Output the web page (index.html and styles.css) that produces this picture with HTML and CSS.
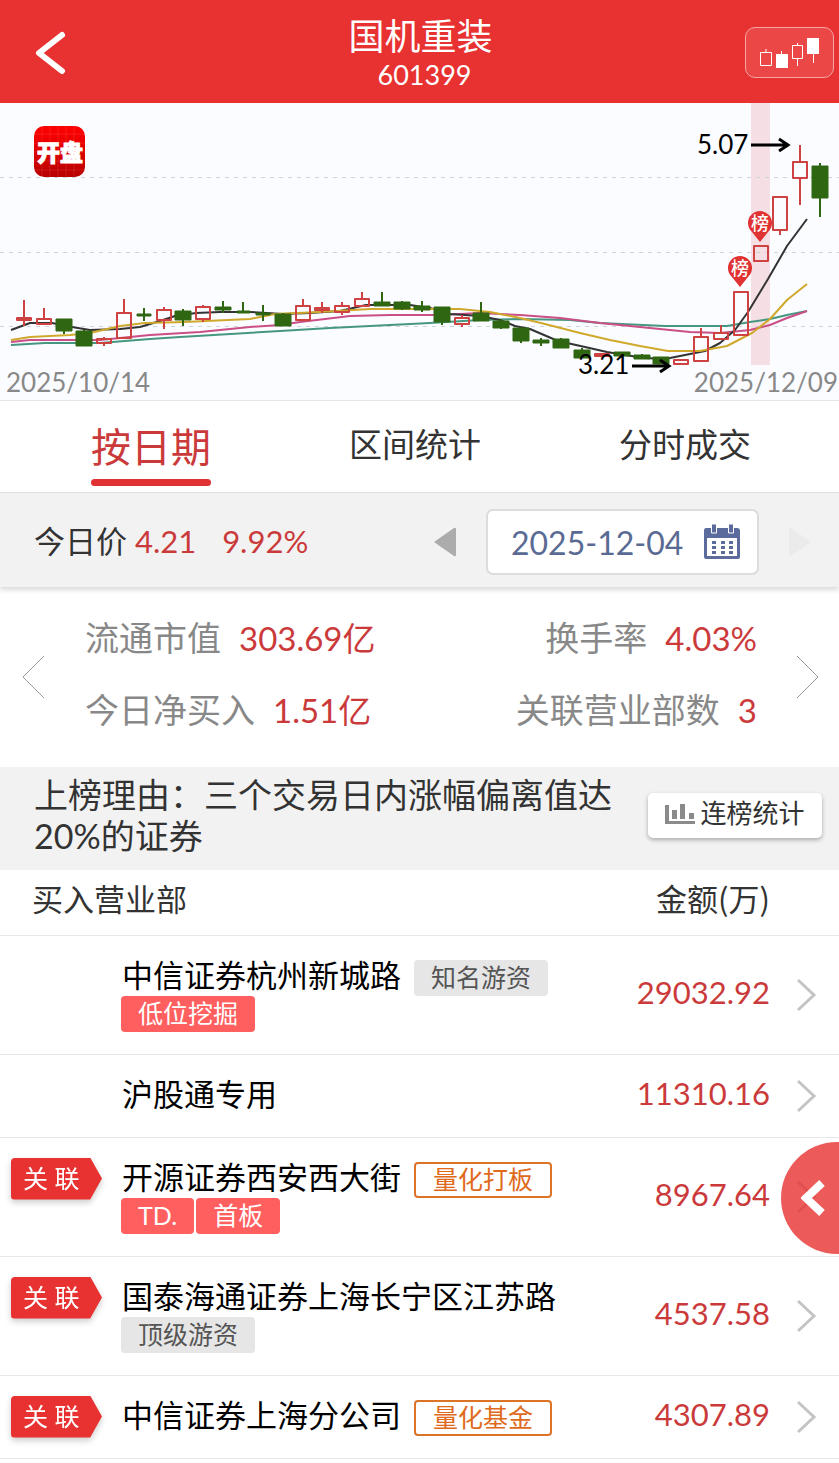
FILE: index.html
```
<!DOCTYPE html>
<html lang="zh-CN">
<head>
	<meta charset="utf-8">
	<meta name="viewport" content="width=device-width">
	<title>国机重装 601399</title>
	<link rel="stylesheet" href="styles.css">
</head>
<body>
	<header class="header">
		<button class="back" aria-label="返回">
			<svg width="34" height="48" viewBox="0 0 34 48"><path d="M29 6 L6 24 L29 42" /></svg>
		</button>
		<div class="title">
			<h1>国机重装</h1>
			<p>601399</p>
		</div>
		<button class="kline-btn" aria-label="K线">
			<svg width="60" height="32" viewBox="0 0 60 32">
				<path class="line" d="M.5 14.500h11v13h-11z M6 14v-3 M32.500 7.500h10v13h-10z M37.500 7v-2 M37.500 21v7" />
				<path class="solid" d="M16 16h5v-3h1v3h6v14h-12z M47 0h12v16h-5v9h-1v-9h-6z" />
			</svg>
		</button>
	</header>

	<section class="chart">
		<svg viewBox="0 103 839 297">
			<defs>
				<linearGradient id="logo" x1="0" y1="0" x2="0" y2="1">
					<stop offset="0.100" stop-color="#fb0000" />
					<stop offset="1" stop-color="#b80000" />
				</linearGradient>
			</defs>
			<rect class="band" x="751" y="103" width="19" height="262" />
			<path class="grid" d="M0 177.500H839 M0 252.500H839 M0 326.500H839" />

			<!-- logo -->
			<rect x="34" y="126" width="51" height="51" rx="10" fill="url(#logo)" />
			<path class="logo-grid" d="M42 126v51 M50 126v51 M58 126v51 M66 126v51 M74 126v51 M34 134h51 M34 143h51 M34 152h51 M34 161h51 M34 170h51" />
			<text class="logo-text" x="60" y="161">开盘</text>

			<!-- moving averages -->
			<path class="ma teal" d="M11 345L45 343L100 343L150 339L180 337L280 331L330 328L430 323L480 320L520 319L570 320L600 323L665 326L727 326L750 322L770 319L787 315L807 311" />
			<path class="ma pink" d="M11 342L30 340L100 340L150 335L200 332L250 327L280 325L300 322L350 316L390 315L440 315L480 313L520 315L560 318L600 323L650 328L690 332L720 333L750 330L770 325L787 318L807 311" />
			<path class="ma black" d="M11 330L30 323L52 323L72 327L90 330L120 329L140 327L160 321L175 316L196 313L220 312L250 312L283 314L310 313L340 311L366 305L410 305L430 308L450 314L480 316L500 320L515 326L530 329L558 341L585 347L607 352L625 355L645 358L665 359L685 355L705 351L720 343L735 330L748 312L768 279L787 246L807 219" />
			<path class="ma yellow" d="M11 340L30 337L70 335L90 333L120 326L145 323L185 322L250 319L275 314L320 312L370 309L460 309L490 312L520 318L545 324L580 333L610 340L640 346L668 351L700 351L727 346L752 333L770 319L787 300L807 284" />

			<!-- falling days -->
			<path class="down-wick" d="M64 331v3 M84 330v2 M144 308v13 M183 309v17 M223 301v12 M243 302v11 M263 305v16 M283 313v2 M382 292v11 M402 301v9 M422 301v11 M442 322v3 M481 302v12 M501 319v10 M521 341v2 M541 338v8 M561 338v2 M582 348v3 M642 354v2 M820 163v54" />
			<path class="down" d="M56 319h16v12h-16z M76 331h16v15h-16z M137 314h14v2h-14z M175 311h16v9h-16z M215 307h16v3h-16z M237 311h13v2h-13z M256 313h14v2h-14z M275 314h16v12h-16z M374 302h16v4h-16z M394 302h16v7h-16z M414 306h16v4h-16z M434 307h16v15h-16z M473 313h16v8h-16z M493 321h16v7h-16z M513 328h16v13h-16z M533 340h16v3h-16z M553 339h16v9h-16z M574 350h16v8h-16z M614 352h16v4h-16z M634 355h16v4h-16z M653 357h16v7h-16z M812 166h16v32h-16z" />
			<!-- rising days -->
			<path class="up filled" d="M17 318h14v2h-14z M315 308h14v2h-14z M595 354h14v2h-14z" />
			<path class="up" d="M37 319h14v5h-14z M97 339h14v4h-14z M117 313h14v25h-14z M157 310h14v10h-14z M196 307h14v12h-14z M296 306h14v14h-14z M335 306h14v6h-14z M355 299h14v7h-14z M455 318h14v6h-14z M674 360h14v4h-14z M694 337h14v24h-14z M714 333h14v6h-14z M734 292h14v43h-14z M754 246h14v15h-14z M773 197h14v33h-14z M793 162h14v16h-14z" />
			<path class="up" d="M24 300v26 M44 308v11 M104 337v2 M104 343v3 M124 299v14 M164 307v3 M164 320v9 M203 305v2 M203 319v3 M303 299v7 M322 302v11 M342 302v4 M342 312v3 M362 292v7 M462 315v3 M462 324v3 M701 328v9 M721 325v8 M780 230v5 M800 145v17 M800 178v27" />

			<!-- list pins -->
			<path class="pin" d="M760 242L752 232A12 12 0 1 1 768 232z M740 287L732 277A12 12 0 1 1 748 277z" />
			<text class="pin-text" x="760" y="230">榜</text>
			<text class="pin-text" x="740" y="275">榜</text>

			<text class="price" x="697" y="154">5.07</text>
			<path class="arrow" d="M751 145h36 M779 139l9 6l-9 6" />
			<text class="price" x="578" y="374">3.21</text>
			<path class="arrow" d="M632 366h36 M660 360l9 6l-9 6" />
			<text class="date" x="6" y="392">2025/10/14</text>
			<text class="date end" x="838" y="392">2025/12/09</text>
		</svg>
	</section>

	<nav class="tabs">
		<a href="#" class="active">按日期</a>
		<a href="#">区间统计</a>
		<a href="#">分时成交</a>
	</nav>

	<section class="day">
		<p>今日价 <span class="red">4.21</span> <span class="red change">9.92%</span></p>
		<button class="step" aria-label="前一天">
			<svg width="24" height="32" viewBox="0 0 24 32"><path d="M1 16L21 2q2-1 2 1v26q0 2-2 1z" fill="#acacac" /></svg>
		</button>
		<label class="picker">
			<input type="text" value="2025-12-04" aria-label="日期" readonly>
			<svg width="38" height="36" viewBox="0 0 38 36">
				<path fill="#5a6b9c" fill-rule="evenodd" d="M3 4h31q3 0 3 3v26q0 2-2 2H3q-2 0-2-2V7q0-3 2-3z M4 14v18h30V14z" />
				<path fill="#5a6b9c" stroke="#fff" d="M8.500 0h5v9h-5z M25.500 0h5v9h-5z" />
				<path fill="#5a6b9c" d="M9 17h4v3h-4z M18 17h4v3h-4z M26 17h4v3h-4z M9 22h4v3h-4z M18 22h4v3h-4z M26 22h4v3h-4z M9 27h4v3h-4z M18 27h4v3h-4z M26 27h4v3h-4z" />
			</svg>
		</label>
		<button class="step" aria-label="后一天">
			<svg width="24" height="32" viewBox="0 0 24 32"><path d="M23 16L3 2q-2-1-2 1v26q0 2 2 1z" fill="#ebebeb" /></svg>
		</button>
	</section>

	<section class="stats">
		<button class="turn" aria-label="上一页">
			<svg width="24" height="44" viewBox="0 0 24 44"><path d="M23 1L2 22L23 43" /></svg>
		</button>
		<dl>
			<div><dt>流通市值</dt><dd>303.69亿</dd></div>
			<div class="right"><dt>换手率</dt><dd>4.03%</dd></div>
			<div><dt>今日净买入</dt><dd>1.51亿</dd></div>
			<div class="right"><dt>关联营业部数</dt><dd>3</dd></div>
		</dl>
		<button class="turn" aria-label="下一页">
			<svg width="24" height="44" viewBox="0 0 24 44"><path d="M1 1L22 22L1 43" /></svg>
		</button>
	</section>

	<section class="reason">
		<p>上榜理由：三个交易日内涨幅偏离值达20%的证券</p>
		<button class="count-btn">
			<svg width="30" height="22" viewBox="0 0 30 22"><path d="M0 2h4v16h26v3H0z M7 7h5v9H7z M15 1h5v15h-5z M24 10h5v6h-5z" fill="#8a8a8a" /></svg>
			连榜统计
		</button>
	</section>

	<table class="seats">
		<thead>
			<tr>
				<th colspan="2">买入营业部</th>
				<th class="amount">金额(万)</th>
				<th class="more"></th>
			</tr>
		</thead>
		<tbody>
			<tr>
				<td class="mark"></td>
				<td class="name">
					<div class="line">中信证券杭州新城路 <span class="tag gray">知名游资</span></div>
					<div class="line"><span class="tag coral">低位挖掘</span></div>
				</td>
				<td class="amount">29032.92</td>
				<td class="more"><a href="#" aria-label="详情"><svg width="20" height="34" viewBox="0 0 20 34"><path d="M1 2L17 17L1 32" /></svg></a></td>
			</tr>
			<tr>
				<td class="mark"></td>
				<td class="name"><div class="line">沪股通专用</div></td>
				<td class="amount">11310.16</td>
				<td class="more"><a href="#" aria-label="详情"><svg width="20" height="34" viewBox="0 0 20 34"><path d="M1 2L17 17L1 32" /></svg></a></td>
			</tr>
			<tr>
				<td class="mark"><div class="flag"><span>关 联</span></div></td>
				<td class="name">
					<div class="line">开源证券西安西大街 <span class="tag orange">量化打板</span></div>
					<div class="line"><span class="tag coral">TD.</span><span class="tag coral">首板</span></div>
				</td>
				<td class="amount">8967.64</td>
				<td class="more"><a href="#" aria-label="详情"><svg width="20" height="34" viewBox="0 0 20 34"><path d="M1 2L17 17L1 32" /></svg></a></td>
			</tr>
			<tr>
				<td class="mark"><div class="flag"><span>关 联</span></div></td>
				<td class="name">
					<div class="line">国泰海通证券上海长宁区江苏路</div>
					<div class="line"><span class="tag gray">顶级游资</span></div>
				</td>
				<td class="amount">4537.58</td>
				<td class="more"><a href="#" aria-label="详情"><svg width="20" height="34" viewBox="0 0 20 34"><path d="M1 2L17 17L1 32" /></svg></a></td>
			</tr>
			<tr>
				<td class="mark"><div class="flag"><span>关 联</span></div></td>
				<td class="name"><div class="line">中信证券上海分公司 <span class="tag orange">量化基金</span></div></td>
				<td class="amount">4307.89</td>
				<td class="more"><a href="#" aria-label="详情"><svg width="20" height="34" viewBox="0 0 20 34"><path d="M1 2L17 17L1 32" /></svg></a></td>
			</tr>
		</tbody>
	</table>

	<button class="drawer" aria-label="展开">
		<svg width="26" height="38" viewBox="0 0 26 38"><path d="M21 4L5 19L21 34" /></svg>
	</button>
</body>
</html>
```
FILE: styles.css
```
* {
    box-sizing: border-box;
}

body {
    margin: 0;
    background-color: #fff;
    color: #333;
    font-family: Lato, "Noto Sans CJK SC", sans-serif;
    font-size: 31px;
}

h1, p, dl, dd {
    margin: 0;
    font-weight: normal;
}

button {
    padding: 0;
    border: none;
    background: none;
    color: inherit;
    font: inherit;
}

svg {
    display: block;
    fill: none;
}

a {
    color: inherit;
    text-decoration: none;
}

.red {
    color: #cb3a3a;
}

/* header */
.header {
    display: grid;
    grid-template-columns: 1fr auto 1fr;
    align-items: center;
    height: 103px;
    padding: 2px 5px 0 33px;
    background-color: #e83131;
    color: #fff;
}

.back {
    justify-self: start;
}

.back path {
    stroke: #fff;
    stroke-width: 6;
    stroke-linecap: round;
    stroke-linejoin: round;
}

.title {
    padding: 4px 0 0;
    margin-right: 26px;
    text-align: center;
}

.title h1 {
    font-size: 36px;
    line-height: 40px;
}

/* the code sits a little right of the name */
.title p {
    padding-left: 8px;
    font-size: 27px;
    line-height: 38px;
}

.kline-btn {
    display: flex;
    justify-content: center;
    justify-self: end;
    width: 89px;
    height: 51px;
    padding-top: 10px;
    border: 1px solid #f5a5a5;
    border-radius: 10px;
    background-color: #eb4747;
}

.kline-btn .line {
    stroke: #fff;
}

.kline-btn .solid {
    fill: #fff;
}

/* chart */
.chart {
    border-bottom: 1px solid #e6e6e6;
    background-color: #fbfcff;
}

.chart svg {
    width: 100%;
}

.band {
    fill: #f6dfe4;
}

.grid {
    stroke: #d0d3da;
    stroke-dasharray: 4 5;
}

.logo-grid {
    stroke: #fff;
    stroke-opacity: 0.1;
}

.logo-text {
    fill: #fff;
    stroke: #fff;
    font-size: 23px;
    font-weight: 900;
    text-anchor: middle;
}

.ma {
    stroke-width: 2;
    stroke-linejoin: round;
}

.teal {
    stroke: #46977f;
}

.pink {
    stroke: #c94f86;
}

.black {
    stroke: #333;
}

.yellow {
    stroke: #d0a92c;
}

.up {
    stroke: #cf4242;
    stroke-width: 2;
    stroke-linejoin: round;
}

.filled {
    fill: #cf4242;
}

.down {
    fill: #2f6612;
    stroke: #2f6612;
    stroke-linejoin: round;
}

.down-wick {
    stroke: #2f6612;
    stroke-width: 2;
}

.pin {
    fill: #e03232;
}

.pin-text {
    fill: #fff;
    font-size: 18px;
    font-weight: 500;
    text-anchor: middle;
}

.price {
    fill: #000;
    font-size: 26px;
}

.arrow {
    stroke: #000;
    stroke-width: 3;
}

.date {
    fill: #888;
    font-size: 26px;
}

.end {
    text-anchor: end;
}

/* tabs */
.tabs {
    display: flex;
    justify-content: space-between;
    align-items: flex-start;
    height: 92px;
    padding: 0 88px 0 91px;
    border-bottom: 1px solid #e2e2e2;
    font-size: 33px;
    line-height: 86px;
}

.tabs .active {
    position: relative;
    height: 85px;
    color: #cb3a3a;
    font-size: 40px;
    line-height: 92px;
}

.tabs .active::after {
    content: "";
    position: absolute;
    right: 0;
    bottom: 0;
    left: 0;
    height: 7px;
    border-radius: 4px;
    background-color: #e03232;
}

/* date bar */
.day {
    display: flex;
    align-items: center;
    gap: 29px;
    height: 94px;
    padding: 6px 27px 2px 34px;
    background-color: #f2f2f2;
    box-shadow: 0 3px 5px rgba(0, 0, 0, 0.15);
}

.day p {
    flex: 1;
    padding-bottom: 6px;
}

.change {
    margin-left: 18px;
}

.picker {
    display: flex;
    align-items: center;
    width: 273px;
    height: 66px;
    padding: 0 16px 0 23px;
    border: 2px solid #dcdcdc;
    border-radius: 7px;
    background-color: #fff;
}

.picker input {
    flex: 1;
    width: 0;
    padding: 0;
    border: none;
    outline: none;
    color: #5a6b93;
    font: inherit;
    font-size: 32px;
}

/* stats */
.stats {
    display: flex;
    align-items: center;
    height: 180px;
    padding: 0 19px 0 21px;
    font-size: 34px;
    line-height: 72px;
}

.stats dl {
    flex: 1;
    display: grid;
    grid-template-columns: auto auto;
    justify-content: space-between;
    padding: 0 39px 6px 40px;
}

.stats dl div {
    display: flex;
    gap: 18px;
}

.stats .right {
    justify-content: flex-end;
}

.stats dt {
    color: #888;
}

.stats dd {
    color: #cb3a3a;
    font-size: 33px;
}

.turn path {
    stroke: #999;
}

/* reason */
.reason {
    display: flex;
    align-items: center;
    justify-content: space-between;
    padding: 7px 17px 14px 34px;
    background-color: #f2f2f2;
    font-size: 34px;
    line-height: 41px;
}

.reason p {
    flex: 1;
}

.count-btn {
    display: flex;
    align-items: center;
    justify-content: center;
    gap: 5px;
    width: 174px;
    height: 45px;
    padding-bottom: 3px;
    border-radius: 5px;
    background-color: #fff;
    box-shadow: 0 2px 4px rgba(0, 0, 0, 0.3);
    font-size: 26px;
}

/* seats */
.seats {
    width: 100%;
    border-collapse: collapse;
}

.seats th {
    height: 65px;
    padding: 0 0 8px 32px;
    border-bottom: 1px solid #e8e8e8;
    font-family: "Noto Sans CJK SC", sans-serif;
    font-weight: normal;
    line-height: 40px;
    text-align: left;
}

.seats td {
    padding: 0;
    border-bottom: 1px solid #e8e8e8;
}

.seats .mark {
    width: 121px;
    padding: 20px 0 0 11px;
    vertical-align: top;
}

.seats .name {
    padding: 24px 0 22px;
    color: #000;
}

.seats .amount {
    padding-left: 0;
    text-align: right;
}

.seats td.amount {
    padding-bottom: 6px;
    color: #cb3a3a;
}

.seats .more {
    width: 69px;
    padding-left: 27px;
}

.more path {
    stroke: #c4c4c4;
    stroke-width: 3;
}

.line {
    display: flex;
    align-items: flex-start;
    gap: 2px;
    height: 36px;
    line-height: 31px;
    white-space: nowrap;
}

.tag {
    height: 36px;
    padding: 0 17px;
    border-radius: 4px;
    font-size: 25px;
    line-height: 34px;
}

.name .line:first-child {
    gap: 13px;
    padding-left: 1px;
}

.gray {
    background-color: #e6e6e6;
    color: #555;
}

.coral {
    background-color: #ff5f5f;
    color: #fff;
}

.orange {
    border: 2px solid #dc7428;
    color: #e06a1c;
    line-height: 31px;
}

.flag {
    filter: drop-shadow(0 3px 3px rgba(0, 0, 0, 0.2));
}

.flag span {
    display: block;
    width: 91px;
    height: 42px;
    padding-left: 12px;
    border-radius: 4px 0 0 4px;
    background-color: #e83131;
    clip-path: polygon(0 0, 87% 0, 100% 50%, 87% 100%, 0 100%);
    color: #fff;
    font-size: 25px;
    line-height: 40px;
}

/* side drawer handle */
.drawer {
    position: fixed;
    right: 0;
    bottom: 209px;
    display: flex;
    align-items: center;
    width: 58px;
    height: 112px;
    padding-left: 20px;
    border-radius: 56px 0 0 56px;
    background-color: rgba(232, 49, 49, 0.8);
}

.drawer path {
    stroke: #fff;
    stroke-width: 8;
}
```
